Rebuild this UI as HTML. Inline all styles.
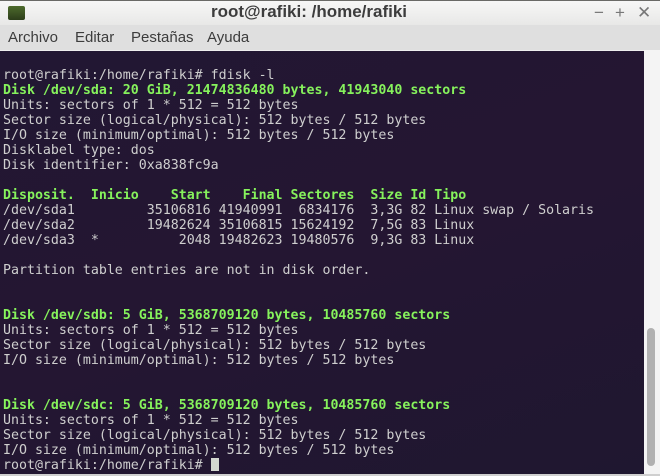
<html><head><style>
body{margin:0;width:660px;height:476px;overflow:hidden;background:#3c3b37;font-family:"Liberation Sans",sans-serif}
#title{position:absolute;left:0;top:0;width:660px;height:25px;background:linear-gradient(#f7f7f6,#e8e8e7);border-top:1px solid #6a6a66;box-sizing:border-box}
#title .t{position:absolute;left:0;width:618px;text-align:center;top:1px;font-weight:bold;font-size:17px;color:#3c3c3c}
#icon{position:absolute;left:8px;top:5px;width:17px;height:14px;background:linear-gradient(#4d6b2c,#2c3d1a);border-radius:2px}
#menu{position:absolute;left:0;top:25px;width:660px;height:25px;background:#dfdfdf;font-size:15px;color:#3c3c3c}
#menu span{position:absolute;top:4px}
#term{position:absolute;left:0;top:50px;width:644px;height:424px;background:linear-gradient(160deg,#221733 0%,#241632 50%,#1f1730 100%);border-top:1px solid #eee}
pre{margin:0;position:absolute;left:3px;top:17px;font-family:"DejaVu Sans Mono",monospace;font-size:13.28px;line-height:15px;color:#cfcfcf}
b{color:#86f25c}
#sb{position:absolute;left:644px;top:50px;width:16px;height:426px;background:#f4f4f4}
#thumb{position:absolute;left:647px;top:328px;width:8px;height:138px;background:#b1b1b1;border-radius:4px}
#bot{position:absolute;left:0;top:474px;width:660px;height:2px;background:#cfcfcf}
.ctl{position:absolute;top:2px;font-size:17px;color:#777}
#cur{display:inline-block;width:8px;height:13px;background:#d3d7cf;vertical-align:-2px}
</style></head><body>
<div id="title"><div id="icon"></div><div class="t">root@rafiki: /home/rafiki</div>
<span class="ctl" style="left:594px">−</span><span class="ctl" style="left:615px">+</span><span class="ctl" style="left:637px">✕</span></div>
<div id="menu"><span style="left:8px">Archivo</span><span style="left:75px">Editar</span><span style="left:131px">Pestañas</span><span style="left:207px">Ayuda</span></div>
<div id="term"><pre>root@rafiki:/home/rafiki# fdisk -l
<b>Disk /dev/sda: 20 GiB, 21474836480 bytes, 41943040 sectors</b>
Units: sectors of 1 * 512 = 512 bytes
Sector size (logical/physical): 512 bytes / 512 bytes
I/O size (minimum/optimal): 512 bytes / 512 bytes
Disklabel type: dos
Disk identifier: 0xa838fc9a

<b>Disposit.  Inicio    Start    Final Sectores  Size Id Tipo</b>
/dev/sda1         35106816 41940991  6834176  3,3G 82 Linux swap / Solaris
/dev/sda2         19482624 35106815 15624192  7,5G 83 Linux
/dev/sda3  *          2048 19482623 19480576  9,3G 83 Linux

Partition table entries are not in disk order.


<b>Disk /dev/sdb: 5 GiB, 5368709120 bytes, 10485760 sectors</b>
Units: sectors of 1 * 512 = 512 bytes
Sector size (logical/physical): 512 bytes / 512 bytes
I/O size (minimum/optimal): 512 bytes / 512 bytes


<b>Disk /dev/sdc: 5 GiB, 5368709120 bytes, 10485760 sectors</b>
Units: sectors of 1 * 512 = 512 bytes
Sector size (logical/physical): 512 bytes / 512 bytes
I/O size (minimum/optimal): 512 bytes / 512 bytes
root@rafiki:/home/rafiki# <span id="cur"></span></pre></div>
<div id="sb"></div><div id="thumb"></div><div id="bot"></div>
</body></html>
